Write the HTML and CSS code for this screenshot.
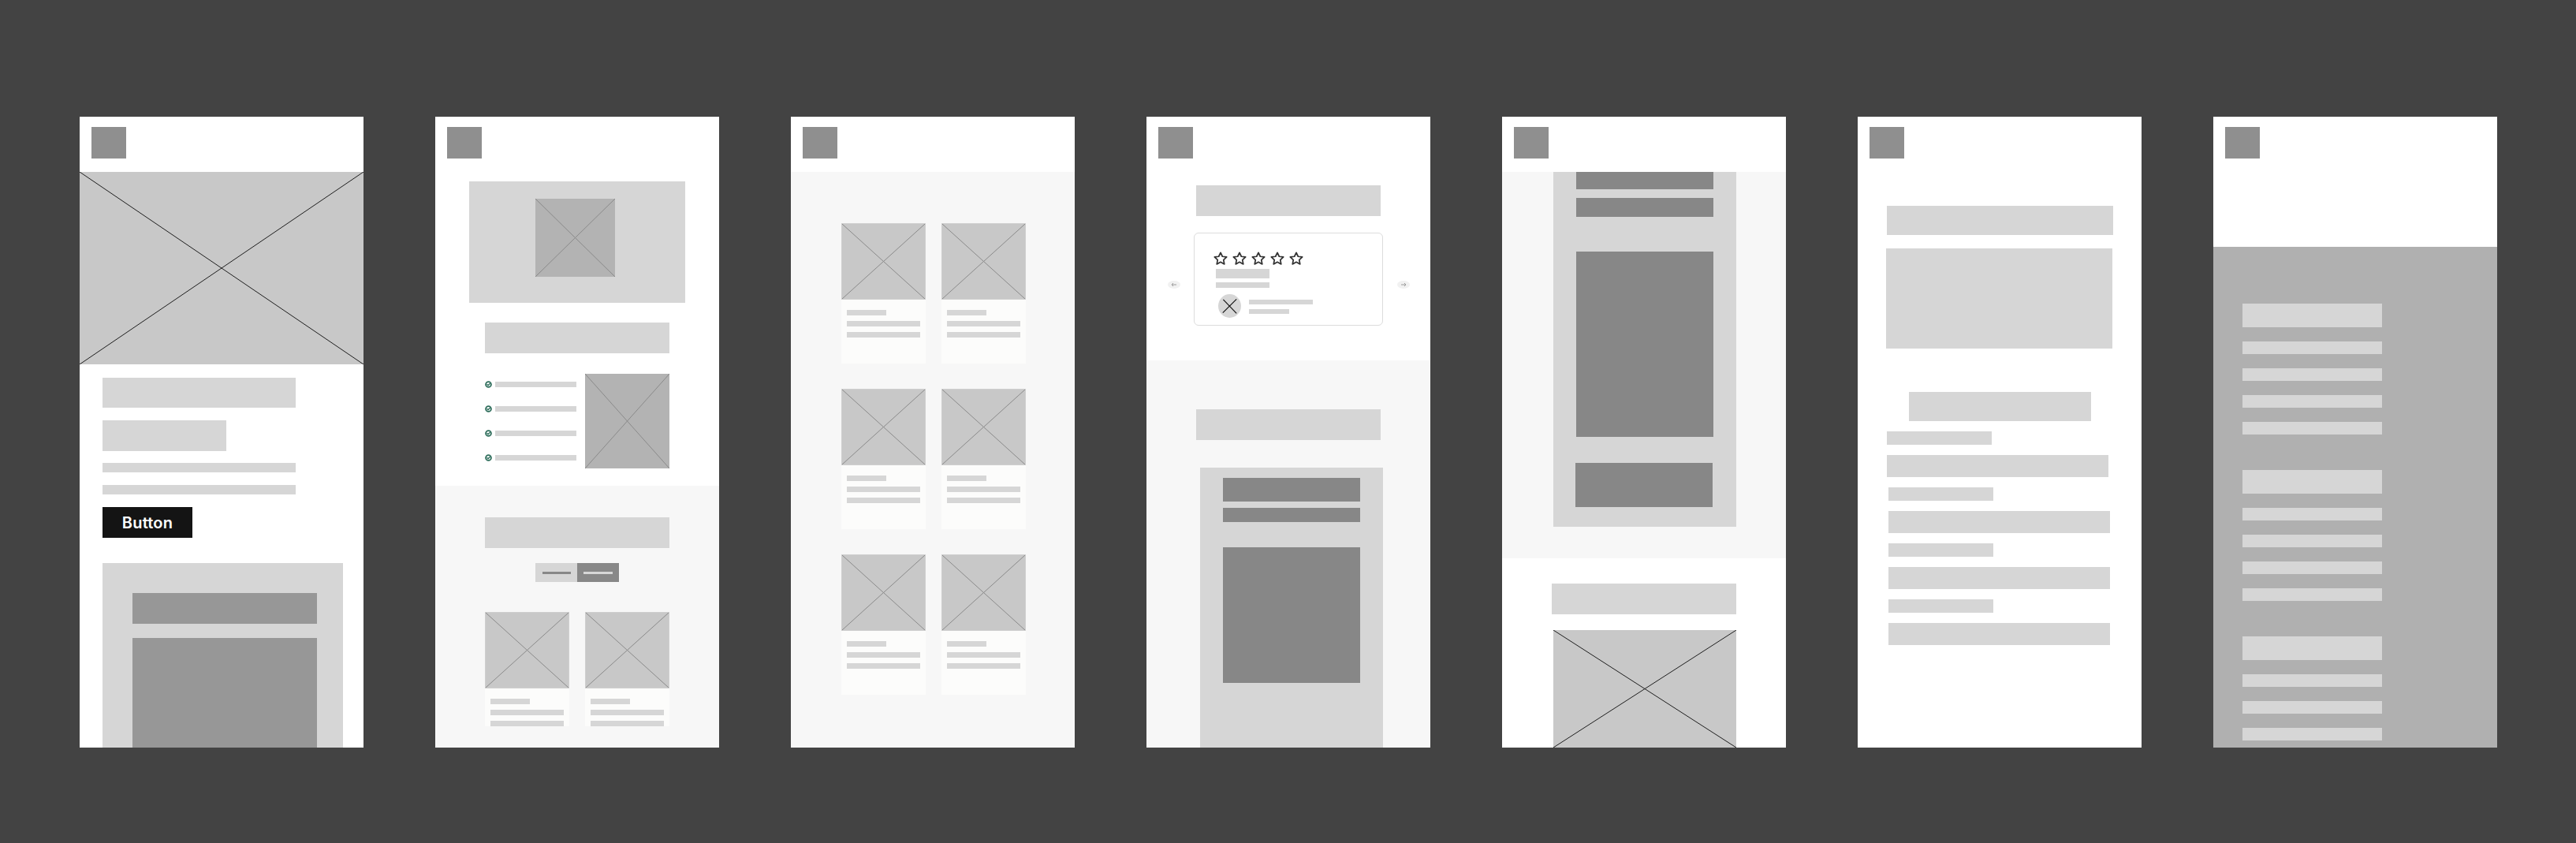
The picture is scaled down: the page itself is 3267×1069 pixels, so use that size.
FILE: index.html
```html
<!DOCTYPE html>
<html lang="en">
<head>
<meta charset="utf-8">
<title>Wireframes</title>
<link rel="stylesheet" href="styles.css">
</head>
<body>
<main class="board">

  <!-- Frame 1 -->
  <section class="frame">
    <header class="hdr"><div class="logo"></div></header>
    <div class="ph ph-hero">
      <svg class="xx" viewBox="0 0 100 100" preserveAspectRatio="none"><line x1="0" y1="0" x2="100" y2="100" vector-effect="non-scaling-stroke"/><line x1="100" y1="0" x2="0" y2="100" vector-effect="non-scaling-stroke"/></svg>
    </div>
    <div class="f1-body">
      <div class="bar f1-t1"></div>
      <div class="bar f1-t2"></div>
      <div class="bar f1-l"></div>
      <div class="bar f1-l"></div>
      <div class="btn">Button</div>
      <div class="f1-card">
        <div class="dk f1-cbar"></div>
        <div class="dk f1-cblock"></div>
      </div>
    </div>
  </section>

  <!-- Frame 2 -->
  <section class="frame">
    <header class="hdr"><div class="logo"></div></header>
    <div class="f2-top">
      <div class="f2-media">
        <div class="ph ph-mid f2-mimg">
          <svg class="xx gray" viewBox="0 0 100 100" preserveAspectRatio="none"><line x1="0" y1="0" x2="100" y2="100" vector-effect="non-scaling-stroke"/><line x1="100" y1="0" x2="0" y2="100" vector-effect="non-scaling-stroke"/></svg>
        </div>
      </div>
      <div class="bar wide-bar f2-bar"></div>
      <div class="f2-feat">
        <ul class="checks">
          <li><svg class="chk" viewBox="0 0 10 10"><circle cx="5" cy="5" r="3.8"/><path d="M3.2 5.1l1.3 1.2 2.4-2.5"/></svg><span class="cline"></span></li>
          <li><svg class="chk" viewBox="0 0 10 10"><circle cx="5" cy="5" r="3.8"/><path d="M3.2 5.1l1.3 1.2 2.4-2.5"/></svg><span class="cline"></span></li>
          <li><svg class="chk" viewBox="0 0 10 10"><circle cx="5" cy="5" r="3.8"/><path d="M3.2 5.1l1.3 1.2 2.4-2.5"/></svg><span class="cline"></span></li>
          <li><svg class="chk" viewBox="0 0 10 10"><circle cx="5" cy="5" r="3.8"/><path d="M3.2 5.1l1.3 1.2 2.4-2.5"/></svg><span class="cline"></span></li>
        </ul>
        <div class="ph ph-mid f2-fimg">
          <svg class="xx gray" viewBox="0 0 100 100" preserveAspectRatio="none"><line x1="0" y1="0" x2="100" y2="100" vector-effect="non-scaling-stroke"/><line x1="100" y1="0" x2="0" y2="100" vector-effect="non-scaling-stroke"/></svg>
        </div>
      </div>
    </div>
    <div class="f2-sec">
      <div class="bar wide-bar"></div>
      <div class="toggle">
        <div class="tg-off"><span></span></div>
        <div class="tg-on"><span></span></div>
      </div>
      <div class="cards2">
        <div class="card">
          <div class="ph ph-card"><svg class="xx gray" viewBox="0 0 100 100" preserveAspectRatio="none"><line x1="0" y1="0" x2="100" y2="100" vector-effect="non-scaling-stroke"/><line x1="100" y1="0" x2="0" y2="100" vector-effect="non-scaling-stroke"/></svg></div>
          <div class="cbody"><span class="ln s"></span><span class="ln"></span><span class="ln"></span></div>
        </div>
        <div class="card">
          <div class="ph ph-card"><svg class="xx gray" viewBox="0 0 100 100" preserveAspectRatio="none"><line x1="0" y1="0" x2="100" y2="100" vector-effect="non-scaling-stroke"/><line x1="100" y1="0" x2="0" y2="100" vector-effect="non-scaling-stroke"/></svg></div>
          <div class="cbody"><span class="ln s"></span><span class="ln"></span><span class="ln"></span></div>
        </div>
      </div>
    </div>
  </section>

  <!-- Frame 3 -->
  <section class="frame">
    <header class="hdr"><div class="logo"></div></header>
    <div class="f3-sec">
      <div class="grid3">
        <div class="card full">
          <div class="ph ph-card"><svg class="xx gray" viewBox="0 0 100 100" preserveAspectRatio="none"><line x1="0" y1="0" x2="100" y2="100" vector-effect="non-scaling-stroke"/><line x1="100" y1="0" x2="0" y2="100" vector-effect="non-scaling-stroke"/></svg></div>
          <div class="cbody"><span class="ln s"></span><span class="ln"></span><span class="ln"></span></div>
        </div>
        <div class="card full">
          <div class="ph ph-card"><svg class="xx gray" viewBox="0 0 100 100" preserveAspectRatio="none"><line x1="0" y1="0" x2="100" y2="100" vector-effect="non-scaling-stroke"/><line x1="100" y1="0" x2="0" y2="100" vector-effect="non-scaling-stroke"/></svg></div>
          <div class="cbody"><span class="ln s"></span><span class="ln"></span><span class="ln"></span></div>
        </div>
        <div class="card full">
          <div class="ph ph-card"><svg class="xx gray" viewBox="0 0 100 100" preserveAspectRatio="none"><line x1="0" y1="0" x2="100" y2="100" vector-effect="non-scaling-stroke"/><line x1="100" y1="0" x2="0" y2="100" vector-effect="non-scaling-stroke"/></svg></div>
          <div class="cbody"><span class="ln s"></span><span class="ln"></span><span class="ln"></span></div>
        </div>
        <div class="card full">
          <div class="ph ph-card"><svg class="xx gray" viewBox="0 0 100 100" preserveAspectRatio="none"><line x1="0" y1="0" x2="100" y2="100" vector-effect="non-scaling-stroke"/><line x1="100" y1="0" x2="0" y2="100" vector-effect="non-scaling-stroke"/></svg></div>
          <div class="cbody"><span class="ln s"></span><span class="ln"></span><span class="ln"></span></div>
        </div>
        <div class="card full">
          <div class="ph ph-card"><svg class="xx gray" viewBox="0 0 100 100" preserveAspectRatio="none"><line x1="0" y1="0" x2="100" y2="100" vector-effect="non-scaling-stroke"/><line x1="100" y1="0" x2="0" y2="100" vector-effect="non-scaling-stroke"/></svg></div>
          <div class="cbody"><span class="ln s"></span><span class="ln"></span><span class="ln"></span></div>
        </div>
        <div class="card full">
          <div class="ph ph-card"><svg class="xx gray" viewBox="0 0 100 100" preserveAspectRatio="none"><line x1="0" y1="0" x2="100" y2="100" vector-effect="non-scaling-stroke"/><line x1="100" y1="0" x2="0" y2="100" vector-effect="non-scaling-stroke"/></svg></div>
          <div class="cbody"><span class="ln s"></span><span class="ln"></span><span class="ln"></span></div>
        </div>
      </div>
    </div>
  </section>

  <!-- Frame 4 -->
  <section class="frame">
    <header class="hdr"><div class="logo"></div></header>
    <div class="f4-top">
      <div class="bar wide-bar"></div>
      <div class="review-wrap">
        <div class="review">
          <div class="stars">
            <svg viewBox="0 0 24 24"><path d="M12 2.8l2.8 5.9 6.4.8-4.7 4.4 1.2 6.4L12 17.2l-5.7 3.1 1.2-6.4-4.7-4.4 6.4-.8z"/></svg>
            <svg viewBox="0 0 24 24"><path d="M12 2.8l2.8 5.9 6.4.8-4.7 4.4 1.2 6.4L12 17.2l-5.7 3.1 1.2-6.4-4.7-4.4 6.4-.8z"/></svg>
            <svg viewBox="0 0 24 24"><path d="M12 2.8l2.8 5.9 6.4.8-4.7 4.4 1.2 6.4L12 17.2l-5.7 3.1 1.2-6.4-4.7-4.4 6.4-.8z"/></svg>
            <svg viewBox="0 0 24 24"><path d="M12 2.8l2.8 5.9 6.4.8-4.7 4.4 1.2 6.4L12 17.2l-5.7 3.1 1.2-6.4-4.7-4.4 6.4-.8z"/></svg>
            <svg viewBox="0 0 24 24"><path d="M12 2.8l2.8 5.9 6.4.8-4.7 4.4 1.2 6.4L12 17.2l-5.7 3.1 1.2-6.4-4.7-4.4 6.4-.8z"/></svg>
          </div>
          <div class="bar rv-l1"></div>
          <div class="bar rv-l2"></div>
          <div class="author">
            <div class="avatar"><svg class="xx" viewBox="0 0 100 100"><line x1="22" y1="22" x2="80" y2="82"/><line x1="80" y1="20" x2="20" y2="80"/></svg></div>
            <div class="alines"><span class="bar al1"></span><span class="bar al2"></span></div>
          </div>
        </div>
        <span class="arrow left"><svg viewBox="0 0 16 10"><path d="M11 5H5M7 3L5 5l2 2"/></svg></span>
        <span class="arrow right"><svg viewBox="0 0 16 10"><path d="M5 5h6M9 3l2 2-2 2"/></svg></span>
      </div>
    </div>
    <div class="f4-sec">
      <div class="bar wide-bar"></div>
      <div class="f4-card">
        <div class="dk f4-b1"></div>
        <div class="dk f4-b2"></div>
        <div class="dk f4-b3"></div>
      </div>
    </div>
  </section>

  <!-- Frame 5 -->
  <section class="frame">
    <header class="hdr"><div class="logo"></div></header>
    <div class="f5-sec">
      <div class="f5-card">
        <div class="dk f5-b1"></div>
        <div class="dk f5-b2"></div>
        <div class="dk f5-b3"></div>
        <div class="dk f5-b4"></div>
      </div>
    </div>
    <div class="f5-bottom">
      <div class="bar wide-bar"></div>
      <div class="ph ph-hero f5-img">
        <svg class="xx" viewBox="0 0 100 100" preserveAspectRatio="none"><line x1="0" y1="0" x2="100" y2="100" vector-effect="non-scaling-stroke"/><line x1="100" y1="0" x2="0" y2="100" vector-effect="non-scaling-stroke"/></svg>
      </div>
    </div>
  </section>

  <!-- Frame 6 -->
  <section class="frame">
    <header class="hdr"><div class="logo"></div></header>
    <div class="f6-body">
      <div class="bar f6-title"></div>
      <div class="bar f6-block"></div>
      <div class="bar f6-sub"></div>
      <div class="f6-form">
        <div class="bar f6-s f6-first"></div>
        <div class="bar f6-lg f6-first"></div>
        <div class="bar f6-s"></div>
        <div class="bar f6-lg"></div>
        <div class="bar f6-s"></div>
        <div class="bar f6-lg"></div>
        <div class="bar f6-s"></div>
        <div class="bar f6-lg"></div>
      </div>
    </div>
  </section>

  <!-- Frame 7 -->
  <section class="frame">
    <header class="hdr f7-hdr"><div class="logo"></div></header>
    <div class="f7-sec">
      <div class="grp">
        <div class="bar gh"></div><div class="bar gi"></div><div class="bar gi"></div><div class="bar gi"></div><div class="bar gi"></div>
      </div>
      <div class="grp">
        <div class="bar gh"></div><div class="bar gi"></div><div class="bar gi"></div><div class="bar gi"></div><div class="bar gi"></div>
      </div>
      <div class="grp">
        <div class="bar gh"></div><div class="bar gi"></div><div class="bar gi"></div><div class="bar gi"></div><div class="bar gi"></div>
      </div>
    </div>
  </section>

</main>
</body>
</html>
```

FILE: styles.css
```css
* { box-sizing: border-box; }
html, body { margin: 0; padding: 0; }
body {
  background: #434343;
  width: 3267px;
  height: 1069px;
  overflow: hidden;
  font-family: Inter, "Liberation Sans", sans-serif;
}
.board {
  display: flex;
  gap: 91px;
  padding: 148px 0 0 101px;
}
.frame {
  width: 360px;
  height: 800px;
  flex: 0 0 360px;
  background: #ffffff;
  overflow: hidden;
  display: flex;
  flex-direction: column;
}
.hdr {
  height: 70px;
  flex: 0 0 70px;
  padding: 13px 15px;
  background: #ffffff;
}
.logo { width: 44px; height: 40px; background: #8f8f8f; }

.bar { background: #d6d6d6; display: block; }
.dk { background: #878787; }
.ph { position: relative; }
.xx { position: absolute; inset: 0; width: 100%; height: 100%; display: block; }
.xx line { stroke: #1e1e1e; stroke-width: 1; }
.xx.gray line { stroke: #8a8a8a; }
.ph-hero { background: #c8c8c8; }
.ph-mid { background: #b3b3b3; }
.ph-card { background: #c8c8c8; height: 97px; border: 1px solid #cfcfcf; }

/* Frame 1 */
.frame > .ph-hero { height: 244px; flex: 0 0 244px; }
.f1-body { padding: 17px 0 0 29px; display: flex; flex-direction: column; }
.f1-t1 { width: 245px; height: 38px; }
.f1-t2 { width: 157px; height: 39px; margin-top: 16px; }
.f1-l { width: 245px; height: 12px; margin-top: 15px; }
.f1-l + .f1-l { margin-top: 16px; }
.btn {
  width: 114px; height: 39px; margin-top: 16px;
  background: #141414; color: #fff;
  display: flex; align-items: center; justify-content: center;
  font-size: 20px; font-weight: 600; letter-spacing: 0.2px;
}
.f1-card { width: 305px; height: 300px; margin-top: 32px; background: #d6d6d6; padding: 38px 0 0 38px; }
.f1-card .dk { background: #979797; width: 234px; }
.f1-cbar { height: 39px; }
.f1-cblock { height: 300px; margin-top: 18px; }

/* Frame 2 */
.f2-top { padding: 12px 0 0; height: 398px; flex: 0 0 398px; }
.f2-media { margin-left: 43px; width: 274px; height: 154px; background: #d6d6d6; padding-top: 22px; display: flex; justify-content: center; }
.f2-mimg { width: 101px; height: 99px; margin-left: -5px; }
.wide-bar { width: 234px; height: 39px; margin-left: 63px; }
.f2-bar { margin-top: 25px; }
.f2-feat { display: flex; margin: 26px 0 0 63px; gap: 11px; }
.checks { list-style: none; margin: 0; padding: 9px 0 0; width: 116px; display: flex; flex-direction: column; gap: 23px; }
.checks li { display: flex; align-items: center; gap: 4px; height: 8px; }
.chk { width: 9px; height: 9px; flex: 0 0 9px; }
.chk circle { fill: none; stroke: #2f6e5c; stroke-width: 2; }
.chk path { fill: none; stroke: #2f6e5c; stroke-width: 1.5; stroke-linecap: round; stroke-linejoin: round; }
.cline { display: block; width: 103px; height: 7px; background: #d6d6d6; }
.f2-fimg { width: 107px; height: 120px; }
.f2-sec { flex: 1; background: #f7f7f7; padding-top: 40px; }
.toggle { display: flex; width: 106px; height: 24px; margin: 19px 0 0 127px; }
.tg-off, .tg-on { flex: 1; display: flex; align-items: center; justify-content: center; }
.tg-off { background: #d6d6d6; }
.tg-on { background: #888888; }
.tg-off span { width: 36px; height: 3px; background: #888; }
.tg-on span { width: 37px; height: 3px; background: #d6d6d6; }
.cards2 { display: flex; gap: 20px; margin: 38px 0 0 63px; }
.card { width: 107px; background: #fcfcfb; }
.cbody { padding: 13px 7px 0; display: flex; flex-direction: column; gap: 7px; }
.ln { display: block; width: 93px; height: 7px; background: #d6d6d6; }
.ln.s { width: 50px; }

/* Frame 3 */
.f3-sec { flex: 1; background: #f7f7f7; padding: 65px 0 0 64px; }
.grid3 { display: grid; grid-template-columns: 107px 107px; column-gap: 20px; row-gap: 32px; }
.card.full { height: 178px; }

/* Frame 4 */
.f4-top { height: 239px; flex: 0 0 239px; padding-top: 17px; }
.review-wrap { position: relative; margin-top: 21px; padding-left: 60px; }
.review { width: 240px; height: 118px; border: 1px solid #dcdcdc; border-radius: 6px; background: #fff; padding: 22px 0 0 24px; }
.stars { display: flex; gap: 4px; margin-left: -1px; }
.stars svg { width: 20px; height: 20px; }
.stars path { fill: none; stroke: #333; stroke-width: 2.1; stroke-linejoin: round; }
.rv-l1 { width: 68px; height: 12px; margin: 3px 0 0 3px; }
.rv-l2 { width: 68px; height: 7px; margin: 5px 0 0 3px; }
.author { display: flex; align-items: center; gap: 10px; margin: 8px 0 0 6px; }
.avatar { position: relative; width: 29px; height: 30px; border-radius: 50%; background: #d6d6d6; }
.avatar .xx line { stroke: #111; stroke-width: 4; }
.alines { display: flex; flex-direction: column; gap: 6px; padding-top: 2px; }
.al1 { width: 81px; height: 6px; }
.al2 { width: 51px; height: 6px; }
.arrow { position: absolute; top: 61px; width: 16px; height: 10px; border-radius: 50%; background: #f1f1f1; display: flex; }
.arrow svg { width: 16px; height: 10px; }
.arrow path { fill: none; stroke: #9a9a9a; stroke-width: 1; }
.arrow.left { left: 27px; }
.arrow.right { left: 318px; }
.f4-sec { flex: 1; background: #f7f7f7; padding-top: 62px; }
.f4-card { width: 232px; height: 400px; margin: 35px 0 0 68px; background: #d6d6d6; padding: 13px 0 0 29px; }
.f4-card .dk { width: 174px; }
.f4-b1 { height: 30px; }
.f4-b2 { height: 18px; margin-top: 8px; }
.f4-b3 { height: 172px; margin-top: 32px; }

/* Frame 5 */
.f5-sec { height: 490px; flex: 0 0 490px; background: #f7f7f7; }
.f5-card { width: 232px; height: 450px; margin-left: 65px; background: #d6d6d6; padding-left: 29px; }
.f5-card .dk { width: 174px; }
.f5-b1 { height: 22px; }
.f5-b2 { height: 24px; margin-top: 11px; }
.f5-b3 { height: 235px; margin-top: 44px; }
.f5-b4 { height: 56px; margin-top: 33px; margin-left: -1px; }
.f5-bottom { flex: 1; padding-top: 32px; }
.f5-img { width: 232px; height: 149px; margin: 20px 0 0 65px; }

/* Frame 6 */
.f6-body { padding: 43px 0 0 37px; display: flex; flex-direction: column; }
.f6-title { width: 287px; height: 37px; }
.f6-block { width: 287px; height: 127px; margin: 17px 0 0 -1px; }
.f6-sub { width: 231px; height: 37px; margin: 55px 0 0 28px; }
.f6-form { display: flex; flex-direction: column; gap: 13px; margin-top: 13px; padding-left: 2px; }
.f6-s { width: 133px; height: 17px; }
.f6-lg { width: 281px; height: 28px; }
.f6-first { margin-left: -2px; }

/* Frame 7 */
.f7-hdr { height: 165px; flex: 0 0 165px; }
.f7-sec { flex: 1; background: #b0b0b0; padding: 72px 0 0 37px; display: flex; flex-direction: column; gap: 45px; }
.grp { display: flex; flex-direction: column; gap: 18px; }
.gh { width: 177px; height: 30px; }
.gi { width: 177px; height: 16px; }
```
